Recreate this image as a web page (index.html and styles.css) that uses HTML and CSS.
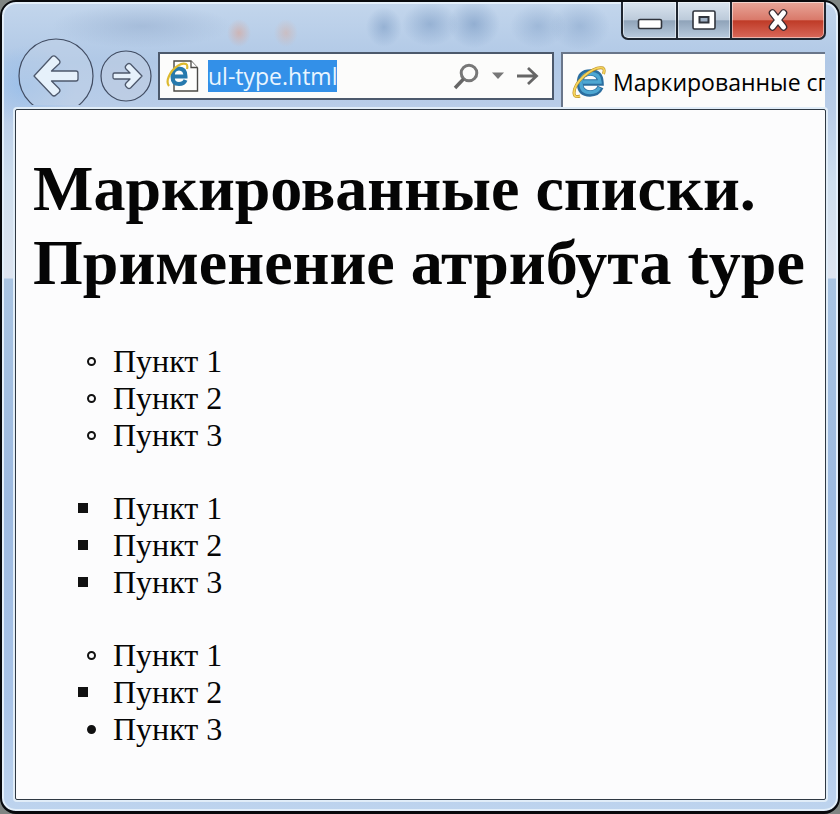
FILE: index.html
```
<!DOCTYPE html>
<html lang="ru">
<head>
    <meta charset="UTF-8">
    <title>Маркированные списки</title>
    <link rel="stylesheet" href="styles.css">
</head>
<body onload="document.getElementById('address').select()">
    <div class="window">
        <div class="titlebar">
            <button class="caption" aria-label="Свернуть">
                <svg width="26" height="12" viewBox="0 0 26 12"><rect x="1.5" y="1.5" width="23" height="9" rx="1.5" fill="#fff" stroke="#30343c" stroke-width="1.6"/></svg>
            </button>
            <button class="caption maximize" aria-label="Развернуть">
                <svg width="24" height="20" viewBox="0 0 24 20"><rect x="1" y="1" width="22" height="18" rx="1.5" fill="#fff" stroke="#30343c" stroke-width="1.6"/><rect x="7.5" y="7" width="9" height="5.5" fill="#9fb0c4" stroke="#30343c" stroke-width="2"/></svg>
            </button>
            <button class="caption close" aria-label="Закрыть">
                <svg width="24" height="22" viewBox="0 0 24 22"><path d="M6.500 4L17.500 18M17.500 4L6.500 18" stroke="#3a2a30" stroke-width="7.5" stroke-linecap="round"/><path d="M6.500 4L17.500 18M17.500 4L6.500 18" stroke="#fff" stroke-width="5" stroke-linecap="round"/></svg>
            </button>
        </div>
        <div class="navbar">
            <button class="back" aria-label="Назад">
                <svg width="76" height="76" viewBox="0 0 76 76"><circle cx="38" cy="38" r="37" fill="#c4d3e6" fill-opacity=".45" stroke="#414c62" stroke-width="1.2"/><path d="M16 38L34 18.500Q36 17 38 19L41 22Q43 24 41 26L33.500 33H58Q60 33 60 35V41Q60 43 58 43H33.500L41 50.500Q43 52.500 41 54.500L38 57Q36 59 34 57Z" fill="#e6f1fb" stroke="#4d586c" stroke-width="1.3" stroke-linejoin="round"/></svg>
            </button>
            <button class="forward" aria-label="Вперёд">
                <svg width="52" height="52" viewBox="0 0 52 52"><circle cx="26" cy="26" r="25" fill="#c4cfdf" fill-opacity=".45" stroke="#414c62" stroke-width="1.2"/><path d="M42 26L30.500 38Q29 39 27.500 38L26 36.500Q24.500 35 26 33L30 29H14.500Q13 29 13 27.500V24.500Q13 23 14.500 23H30L26 19Q24.500 17 26 15.500L27.500 14Q29 13 30.500 14Z" fill="#e6f1fb" stroke="#4d586c" stroke-width="1.3" stroke-linejoin="round"/></svg>
            </button>
            <div class="address-box">
                <svg width="34" height="34" viewBox="0 0 34 34">
                    <path d="M8 2H25L31.500 9V32H8Z" fill="#fdfdfb" stroke="#4b4a46" stroke-width="1.4"/>
                    <path d="M25 2V8.500H31.500" fill="#fff" stroke="#4b4a46" stroke-width="1.3"/>
                    <path d="M19.500 21Q18 25 13 25Q6.500 25 6.500 17.500Q6.500 9.500 13 9.500Q19.500 9.500 19.500 17.500H8" fill="none" stroke="#2679ad" stroke-width="4"/>
                    <path d="M3 27Q-1 22 6 12Q14 3 20 5Q22 6 21 10" fill="none" stroke="#dcb92e" stroke-width="2.200"/>
                </svg>
                <input id="address" class="address" type="text" value="ul-type.html" aria-label="Адрес" autofocus>
                <button class="tool" aria-label="Поиск">
                    <svg width="28" height="28" viewBox="0 0 28 28"><circle cx="17" cy="11" r="7.800" fill="none" stroke="#777" stroke-width="3"/><path d="M11.500 17L3 26" stroke="#666" stroke-width="3.500"/></svg>
                </button>
                <button class="tool" aria-label="Показать адреса">
                    <svg width="12" height="8" viewBox="0 0 12 8"><path d="M0 .5H12L6 7Z" fill="#777"/></svg>
                </button>
                <button class="tool" aria-label="Переход">
                    <svg width="24" height="20" viewBox="0 0 24 20"><path d="M1 10H20M12 2L20.500 10L12 18" fill="none" stroke="#666" stroke-width="2.800"/></svg>
                </button>
            </div>
            <div class="tab">
                <svg width="34" height="34" viewBox="0 0 34 34">
                    <path d="M28.500 22Q25.500 28.500 18 28.500Q8 28.500 8 18Q8 7.500 18.500 7.500Q28 7.500 28.500 17.500H11" fill="none" stroke="#2b6e9f" stroke-width="6.400"/>
                    <path d="M27.500 22.500Q25 27.500 18 27.500Q9 27.500 9 18Q9 8.500 18.500 8.500Q27.500 8.500 28 17H11" fill="none" stroke="#4da7d2" stroke-width="3.400"/>
                    <path d="M8 31Q2 33 2 28Q2 20 12 11Q24 1 31 3Q33 4 31.500 9" fill="none" stroke="#b98c22" stroke-width="3"/>
                    <path d="M8 31Q2 33 2 28Q2 20 12 11Q24 1 31 3Q33 4 31.500 9" fill="none" stroke="#f5d45c" stroke-width="1.800"/>
                </svg>
                <span class="tab-title">Маркированные списки</span>
            </div>
        </div>
        <div class="page">
            <h1>Маркированные списки. Применение атрибута type</h1>
            <ul class="circle">
                <li>Пункт 1</li>
                <li>Пункт 2</li>
                <li>Пункт 3</li>
            </ul>
            <ul class="square">
                <li>Пункт 1</li>
                <li>Пункт 2</li>
                <li>Пункт 3</li>
            </ul>
            <ul>
                <li class="circle">Пункт 1</li>
                <li class="square">Пункт 2</li>
                <li class="disc">Пункт 3</li>
            </ul>
        </div>
    </div>
</body>
</html>
```

FILE: styles.css
```
*,
*::before {
    box-sizing: border-box;
}

body {
    margin: 0;
    background: #7f8583;
}

button {
    padding: 0;
    border: none;
    background: none;
}

svg {
    display: block;
    flex: none;
}

.window {
    display: flex;
    flex-direction: column;
    min-height: 100vh;
    padding: 0 12px 11px 13px;
    border: 2px solid #080a0d;
    border-bottom-width: 3px;
    border-radius: 16px;
    box-shadow: inset 0 0 0 2px #e3effa;
    background:
        radial-gradient(ellipse 90px 22px at 140px 24px, rgba(140, 165, 200, .45), transparent),
        radial-gradient(ellipse 12px 14px at 237px 31px, rgba(222, 160, 140, .55), transparent),
        radial-gradient(ellipse 12px 14px at 284px 31px, rgba(222, 170, 150, .45), transparent),
        radial-gradient(ellipse 18px 20px at 382px 25px, rgba(105, 140, 185, .45), transparent),
        radial-gradient(ellipse 28px 22px at 428px 22px, rgba(105, 140, 185, .45), transparent),
        radial-gradient(ellipse 26px 24px at 472px 22px, rgba(105, 140, 185, .5), transparent),
        radial-gradient(ellipse 28px 22px at 536px 24px, rgba(105, 140, 185, .35), transparent),
        radial-gradient(ellipse 30px 24px at 578px 24px, rgba(105, 140, 185, .35), transparent),
        radial-gradient(ellipse 50px 40px at 24px 84px, rgba(130, 180, 235, .5), transparent),
        linear-gradient(#c3d6ec 0, #b0c8e6 60px, #b9cde8 108px, #cfdfee 180px, #dde4f0 276px, #a9c4e2 277px, #9dbae0 500px, #a9c4e8 700px, #bed4ee 100%);
}

.titlebar {
    display: flex;
    justify-content: flex-end;
    height: 36px;
}

.caption {
    display: flex;
    align-items: center;
    justify-content: center;
    width: 57px;
    height: 38px;
    border: 2px solid #1f2630;
    border-top: none;
    border-radius: 0 0 0 7px;
    box-shadow: inset 0 0 0 1px rgba(255, 255, 255, .5);
    background: linear-gradient(#dbe5f0, #bccada 50%, #8fa3b9 52%, #b9cbde);
}

.caption:first-child {
    padding-top: 8px;
}

.maximize {
    width: 54px;
    border-left: none;
    border-radius: 0;
}

.close {
    width: 94px;
    border-left: none;
    border-radius: 0 0 7px 0;
    background: linear-gradient(#e8a698, #d9796a 50%, #bf3b27 52%, #d9685a);
}

.navbar {
    display: flex;
    align-items: flex-start;
    height: 71px;
}

.back {
    height: 67px;
    margin-left: 3px;
    overflow: hidden;
}

.forward {
    margin: 12px 6px 0;
}

.address-box {
    display: flex;
    align-items: center;
    flex: 1;
    min-width: 0;
    height: 48px;
    margin-top: 14px;
    padding: 0 12px 0 6px;
    border: 2px solid #4c596c;
    background: #fcfcfb;
}

.address {
    flex: 1;
    min-width: 0;
    margin-left: 8px;
    padding: 0;
    border: none;
    outline: none;
    background: none;
    font: 23px "Open Sans", "Noto Sans", sans-serif;
}

.address::selection {
    background: #3390e8;
    color: #e9f5ff;
}

.tool {
    margin-left: 12px;
}

.tab {
    display: flex;
    align-items: center;
    width: 264px;
    height: 57px;
    margin: 14px 1px 0 7px;
    padding-left: 9px;
    border-top: 2px solid #69768a;
    border-left: 2px solid #69768a;
    background: #fcfcfb;
}

.tab-title {
    margin-left: 7px;
    overflow: hidden;
    white-space: nowrap;
    font: 23px "Open Sans", "Noto Sans", sans-serif;
}

.page {
    flex: 1;
    padding: 0 8px 0 17px;
    border: 1px solid #2f3943;
    border-radius: 2px;
    box-shadow: 0 0 0 2px #e1edf8;
    background: #fcfcfd;
    color: #050505;
    font: 32px/37px "Liberation Serif", "Times New Roman", serif;
}

h1 {
    margin: 42px 0 43px;
    font-size: 64px;
    line-height: 74px;
}

ul {
    margin: 0 0 36px;
    padding-left: 80px;
    list-style: none;
}

li::before {
    content: "";
    display: inline-block;
    width: 9px;
    height: 9px;
    margin: 0 17px 6px -26px;
    border: 2px solid #111;
    border-radius: 50%;
}

.disc::before {
    background: #111;
}

ul.square li::before,
li.square::before {
    width: 10px;
    height: 10px;
    margin: 0 25px 6px -35px;
    border-radius: 0;
    background: #111;
}
```
